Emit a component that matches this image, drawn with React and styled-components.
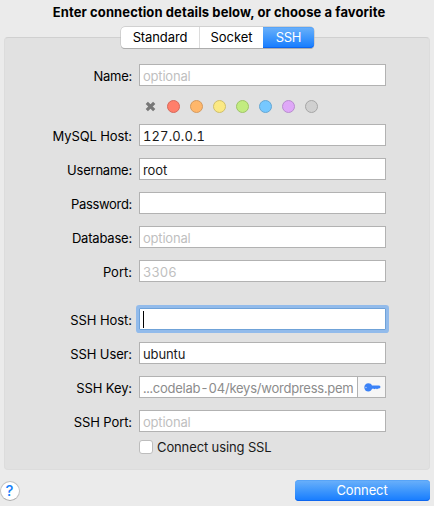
import React from "react";
import styled, { createGlobalStyle, css } from "styled-components";

const GlobalStyle = createGlobalStyle`
  *, *::before, *::after { box-sizing: border-box; }
  body {
    margin: 0;
    background: #ebebeb;
    color: #000;
    font: 13px/16px Inter, "Liberation Sans", sans-serif;
    overflow: hidden;
  }
`;

const Window = styled.main`
  width: 434px;
  height: 506px;
  display: flex;
  flex-direction: column;
  background: #ebebeb;
`;

const Title = styled.h1`
  margin: 0;
  padding: 4px 0 0 4px;
  height: 27px;
  width: 434px;
  font-size: 13px;
  line-height: 16px;
  font-weight: 700;
  letter-spacing: ${(p) => p.$spacing};
  text-align: center;
  white-space: nowrap;
`;

const Tabs = styled.div`
  position: relative;
  z-index: 1;
  align-self: flex-start;
  display: flex;
  width: 193px;
  height: 21px;
  margin: 0 0 -11px 121px;
  border-radius: 4px;
  background: #fff;
  box-shadow: 0 0 0 0.5px #b8b8b8, 0 1px 0.5px #a2a2a2;
`;

const Tab = styled.button`
  width: ${(p) => p.$width}px;
  height: 21px;
  padding: 0;
  border: 0;
  border-right: ${(p) => (p.$divider ? "1px solid #dcdcdc" : "0")};
  background: transparent;
  color: #000;
  font: inherit;
  letter-spacing: ${(p) => p.$spacing || "0"};
  line-height: 21px;
  border-radius: 0;
  ${(p) =>
    p.$active &&
    css`
      color: #fff;
      border-radius: 0 4px 4px 0;
      background: linear-gradient(#6bb1fa, #3f97fc 50%, #157bff);
      box-shadow: inset 0 1px 0 #57a4f8, inset 0 -1px 0 #0d66ef;
    `}
`;

const Panel = styled.section`
  width: 426px;
  height: 433px;
  margin-left: 4px;
  padding: 26px 0 0;
  display: flex;
  flex-direction: column;
  gap: 12px;
  border: 1px solid #dcdcdc;
  border-top-color: #d0d0d0;
  border-radius: 4px;
  background: #e1e1e1;
`;

const Row = styled.label`
  display: grid;
  grid-template-columns: 127px 247px;
  column-gap: 7px;
  height: 22px;
  margin-top: ${(p) => p.$before || 0}px;
`;

const Label = styled.span`
  padding-top: 4px;
  text-align: right;
  white-space: nowrap;
  letter-spacing: ${(p) => p.$spacing || "0"};
`;

const Field = styled.span`
  display: flex;
  width: 247px;
  height: 22px;
  border: 1px solid ${(p) => (p.$focused ? "#6fa2d8" : "#b2b2b2")};
  background: #fff;
  box-shadow: ${(p) => (p.$focused ? "0 0 0 3px #92bbeb" : "none")};
  border-radius: ${(p) => (p.$focused ? "1px" : "0")};
`;

const Value = styled.span`
  flex: 1;
  min-width: 0;
  padding: 3px 0 0 3px;
  white-space: nowrap;
  font-variant-numeric: ${(p) => (p.$tabular ? "tabular-nums" : "normal")};
  letter-spacing: ${(p) => p.$spacing || "0"};
  color: ${(p) => p.$color || "#1a1a1a"};
`;

const Caret = styled.i`
  width: 1px;
  height: 17px;
  margin: 2px 0 0 3px;
  background: #000;
`;

const KeyButton = styled.span`
  flex: none;
  width: 28px;
  height: 20px;
  display: flex;
  align-items: center;
  justify-content: center;
  padding-left: 1px;
  border-left: 1px solid #b2b2b2;
  background: #f6f6f6;
`;

const Swatches = styled.div`
  height: 14px;
  margin: 1px 0 -1px 138.5px;
  display: flex;
  align-items: center;
  gap: 10px;
`;

const Swatch = styled.span`
  width: 13px;
  height: 13px;
  border: 1px solid ${(p) => p.$edge};
  border-radius: 50%;
  background: ${(p) => p.$fill};
`;

const ClearIcon = styled.svg`
  width: 13px;
  height: 13px;
`;

const CheckRow = styled.label`
  height: 16px;
  display: flex;
  align-items: center;
  gap: 4px;
  margin: -5px 0 0 134px;
  letter-spacing: ${(p) => p.$spacing};
  color: #1a1a1a;
`;

const Box = styled.span`
  width: 14px;
  height: 14px;
  border: 1px solid #bdbdbd;
  border-radius: 3px;
  background: #fff;
`;

const Footer = styled.footer`
  display: flex;
  align-items: flex-start;
  justify-content: space-between;
  padding: 10px 4px 0 0;
`;

const Help = styled.button`
  width: 20px;
  height: 20px;
  margin: 1px 0 0;
  padding: 0 1px 0 0;
  border: 1px solid #c3c3c3;
  border-bottom-color: #acacac;
  border-radius: 50%;
  background: #fff;
  color: #1580fa;
  font: 500 15px/18px Inter, sans-serif;
`;

const Connect = styled.button`
  width: 135px;
  height: 21px;
  padding: 0 1px 0 0;
  border: 0;
  border-radius: 4px;
  color: #fff;
  font: inherit;
  letter-spacing: ${(p) => p.$spacing};
  line-height: 21px;
  background: linear-gradient(#6bb1fa, #3f97fc 50%, #157bff);
  box-shadow: inset 0 1px 0 #57a4f8, inset 0 -1px 0 #0d66ef;
`;

const COLORS = [
  ["#ff7f6b", "#d6695b"],
  ["#ffb76b", "#d49a5f"],
  ["#fbe983", "#cfbf6c"],
  ["#c2ec80", "#9fc468"],
  ["#76c8ff", "#66a7d3"],
  ["#dfa8f8", "#b88dce"],
  ["#d0d0d0", "#a6a6a6"],
];

const HINT = "#bfbfbf";

function KeyIcon() {
  return (
    <svg width="17" height="9" viewBox="0 0 17 9">
      <path
        fill="#3b82f7"
        fillRule="evenodd"
        d="M4.4 0.3C6.2 0.3 7.4 1.2 8 2.5H15.4L16.7 3.9L15.3 5.6H14.2L13.6 6.3L13 5.6L12.2 6.3L11.4 5.6L10.6 6.2L9.8 5.8H8.1C7.5 7.4 6.2 8.5 4.4 8.5C2 8.5 0.3 6.7 0.3 4.4S2 0.3 4.4 0.3ZM2 3.8A0.5 0.7 0 1 0 2 5.2A0.5 0.7 0 1 0 2 3.8Z"
      />
    </svg>
  );
}

function FormRow({ label, spacing, before, focused, children }) {
  return (
    <Row $before={before}>
      <Label $spacing={spacing}>{label}</Label>
      <Field $focused={focused}>{children}</Field>
    </Row>
  );
}

export default function App() {
  return (
    <>
      <GlobalStyle />
      <Window>
        <Title $spacing="0.1px">Enter connection details below, or choose a favorite</Title>
        <Tabs>
          <Tab $width={79} $divider $spacing="-0.1px">Standard</Tab>
          <Tab $width={63}>Socket</Tab>
          <Tab $width={51} $active $spacing="-0.3px">SSH</Tab>
        </Tabs>
        <Panel>
          <FormRow label="Name:" spacing="-0.25px">
            <Value $color={HINT} $spacing="-0.2px">optional</Value>
          </FormRow>
          <Swatches>
            <ClearIcon viewBox="0 0 13 13">
              <path d="M2.8 2.8L10.2 10.2M10.2 2.8L2.8 10.2" stroke="#777" strokeWidth="3.2" />
            </ClearIcon>
            {COLORS.map(([fill, edge]) => (
              <Swatch key={fill} $fill={fill} $edge={edge} />
            ))}
          </Swatches>
          <FormRow label="MySQL Host:" spacing="-0.12px">
            <Value $tabular $spacing="0.12px">127.0.0.1</Value>
          </FormRow>
          <FormRow label="Username:" spacing="-0.22px">
            <Value $spacing="-0.1px">root</Value>
          </FormRow>
          <FormRow label="Password:" spacing="-0.32px" />
          <FormRow label="Database:" spacing="-0.2px">
            <Value $color={HINT} $spacing="-0.2px">optional</Value>
          </FormRow>
          <FormRow label="Port:">
            <Value $tabular $color={HINT}>3306</Value>
          </FormRow>
          <FormRow label="SSH Host:" before={14} focused spacing="-0.06px">
            <Caret />
          </FormRow>
          <FormRow label="SSH User:" spacing="-0.12px">
            <Value $spacing="-0.1px">ubuntu</Value>
          </FormRow>
          <FormRow label="SSH Key:" spacing="-0.1px">
            <Value $tabular $color="#8c8c8c" $spacing="-0.23px">...codelab-04/keys/wordpress.pem</Value>
            <KeyButton>
              <KeyIcon />
            </KeyButton>
          </FormRow>
          <FormRow label="SSH Port:" spacing="-0.1px">
            <Value $color={HINT} $spacing="-0.2px">optional</Value>
          </FormRow>
          <CheckRow $spacing="-0.12px">
            <Box />
            Connect using SSL
          </CheckRow>
        </Panel>
        <Footer>
          <Help>?</Help>
          <Connect $spacing="-0.1px">Connect</Connect>
        </Footer>
      </Window>
    </>
  );
}
